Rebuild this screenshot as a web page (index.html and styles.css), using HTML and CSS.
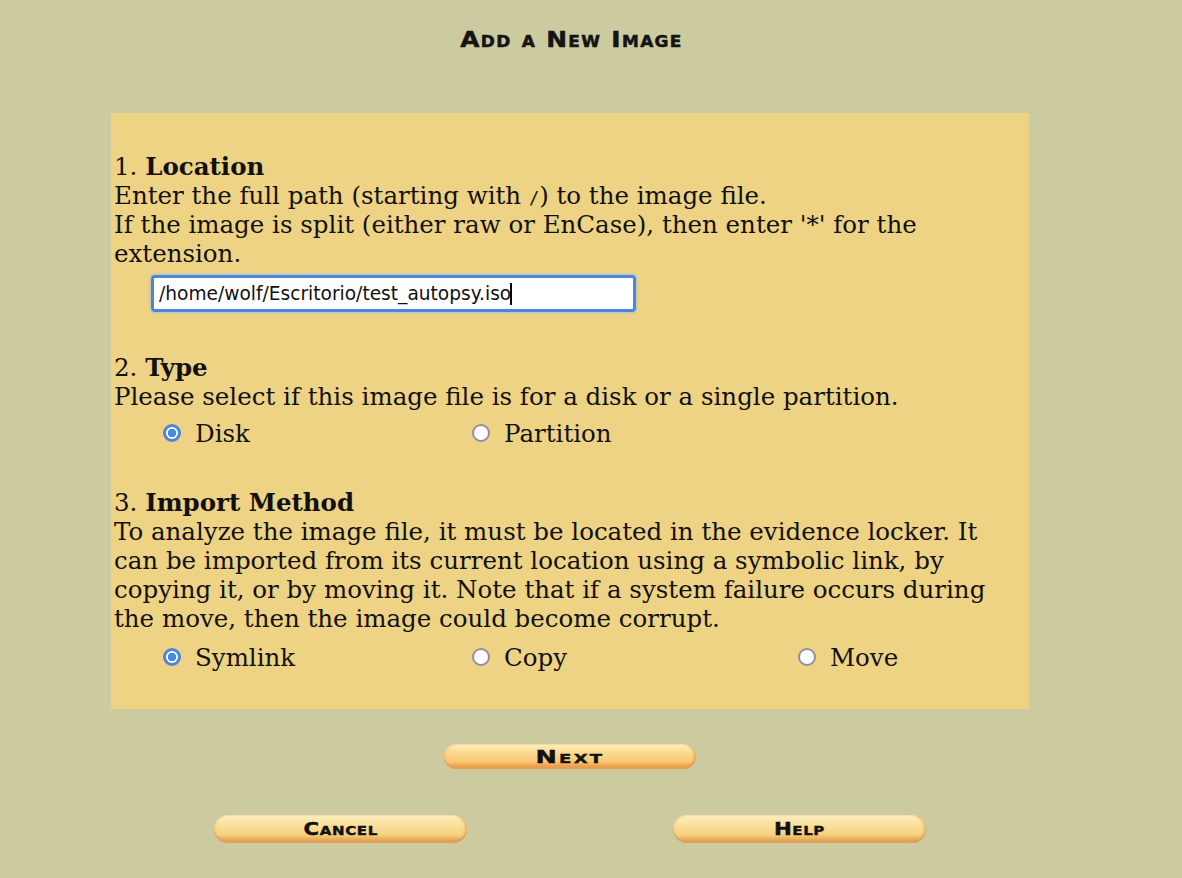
FILE: index.html
```html
<!DOCTYPE html>
<html>
<head>
<meta charset="utf-8">
<title>Add a New Image</title>
<link rel="stylesheet" href="styles.css">
</head>
<body>
<div class="page">
  <h1 class="title"><span class="title-text">Add a New Image</span></h1>

  <form class="panel">
    <section class="step step-location">
      <div class="line">1. <b>Location</b></div>
      <div class="line">Enter the full path (starting with <tt class="slash">/</tt>) to the image file.</div>
      <div class="line">If the image is split (either raw or EnCase), then enter '*' for the</div>
      <div class="line">extension.</div>
      <div class="input-row">
        <div class="path-input"><span class="path-text">/home/wolf/Escritorio/test_autopsy.iso</span><span class="caret"></span></div>
      </div>
    </section>

    <section class="step step-type">
      <div class="line">2. <b>Type</b></div>
      <div class="line">Please select if this image file is for a disk or a single partition.</div>
      <div class="radio-row radio-row-type">
        <label class="radio-item"><span class="radio checked"></span>Disk</label>
        <label class="radio-item"><span class="radio"></span>Partition</label>
      </div>
    </section>

    <section class="step step-import">
      <div class="line">3. <b>Import Method</b></div>
      <div class="line">To analyze the image file, it must be located in the evidence locker. It</div>
      <div class="line">can be imported from its current location using a symbolic link, by</div>
      <div class="line">copying it, or by moving it. Note that if a system failure occurs during</div>
      <div class="line">the move, then the image could become corrupt.</div>
      <div class="radio-row radio-row-import">
        <label class="radio-item"><span class="radio checked"></span>Symlink</label>
        <label class="radio-item"><span class="radio"></span>Copy</label>
        <label class="radio-item"><span class="radio"></span>Move</label>
      </div>
    </section>
  </form>

  <div class="btn-row btn-row-next">
    <button class="pill pill-next" type="button"><span class="pill-text">Next</span></button>
  </div>
  <div class="btn-row btn-row-bottom">
    <button class="pill pill-wide" type="button"><span class="pill-text">Cancel</span></button>
    <button class="pill pill-wide" type="button"><span class="pill-text">Help</span></button>
  </div>
</div>
</body>
</html>
```

FILE: styles.css
```css
html, body {
  margin: 0;
  padding: 0;
}

body {
  background: #cccba0;
  width: 1182px;
  height: 878px;
  overflow: hidden;
}

.page {
  width: 1140px;
  display: flex;
  flex-direction: column;
  align-items: center;
}

.title {
  margin: 27px 0 0 0;
  height: 86px;
  font-family: "DejaVu Sans", sans-serif;
  font-weight: bold;
  font-size: 22px;
  line-height: 26px;
  font-variant: small-caps;
  color: #141414;
  text-align: center;
}

.title-text {
  display: inline-block;
  letter-spacing: 1.2px;
  transform: scaleX(1.13);
  -webkit-text-stroke: 0.5px #141414;
  margin-left: 2px;
}

.panel {
  box-sizing: border-box;
  width: 918px;
  background: #eed385;
  padding: 39px 0 28px 3px;
  font-family: "DejaVu Serif", serif;
  font-size: 24.5px;
  line-height: 29px;
  color: #111;
  display: flex;
  flex-direction: column;
}

.line {
  height: 29px;
  white-space: nowrap;
}

.line b {
  font-weight: bold;
}

.slash {
  font-family: "DejaVu Sans Mono", monospace;
  font-size: 17px;
  line-height: 1;
}

.input-row {
  padding: 7px 0 0 37px;
}

.path-input {
  box-sizing: border-box;
  width: 485px;
  height: 37px;
  border: 3px solid #4a86e1;
  border-radius: 4px;
  box-shadow: 0 0 0 2px #c9cbb0;
  background: #fff;
  display: flex;
  align-items: center;
  padding-left: 5px;
  font-family: "DejaVu Sans", sans-serif;
  font-size: 18.6px;
  color: #111;
}

.caret {
  display: inline-block;
  width: 2px;
  height: 22px;
  background: #000;
  margin-left: -1px;
}

.step-type {
  margin-top: 41px;
}

.step-import {
  margin-top: 33px;
}

.radio-row {
  display: grid;
  grid-template-columns: 309px 326px auto;
  padding-left: 49px;
  align-items: center;
}

.radio-row-type {
  height: 44px;
}

.radio-row-import {
  height: 48px;
}

.radio-item {
  display: flex;
  align-items: center;
  gap: 14px;
}

.radio {
  box-sizing: border-box;
  width: 18px;
  height: 18px;
  border-radius: 50%;
  border: 2px solid #8f8f9d;
  background: #fff;
  flex: none;
}

.radio.checked {
  border: 3px solid #4a86e1;
  background: radial-gradient(circle, #4a86e1 0 4px, #fff 4.5px);
}

.btn-row {
  display: flex;
  justify-content: center;
}

.btn-row-next {
  margin-top: 35px;
}

.btn-row-bottom {
  margin-top: 46px;
  gap: 206px;
}

.pill {
  box-sizing: border-box;
  height: 25px;
  width: 252px;
  border: none;
  border-radius: 13px;
  padding: 0;
  background: linear-gradient(to bottom, #fdf0c4 0%, #fbdc94 30%, #f8c873 70%, #eea24e 88%, #e59a48 100%);
  box-shadow: inset 0 -2px 0 #e8a050, inset -2px 0 2px rgba(220,140,60,0.5), inset 2px 0 2px rgba(240,190,110,0.4);
  font-family: "DejaVu Sans", sans-serif;
  font-weight: bold;
  font-variant: small-caps;
  font-size: 17px;
  color: #111;
  line-height: 22px;
}

.pill-text {
  display: inline-block;
  transform: scaleX(1.25);
  letter-spacing: 0.5px;
  -webkit-text-stroke: 0.4px #111;
}

.pill-next .pill-text {
  transform: scaleX(1.5);
  letter-spacing: 1.5px;
}

.pill-wide {
  height: 28px;
  width: 253px;
  border-radius: 14px;
  line-height: 26px;
  background: linear-gradient(to bottom, #fdf0c4 0%, #fbe2a0 30%, #f6d280 70%, #e8a95a 88%, #dc9c55 100%);
  box-shadow: inset 0 -2px 0 #dea05a, inset -2px 0 2px rgba(220,150,70,0.5), inset 2px 0 2px rgba(240,200,120,0.4);
}
```
